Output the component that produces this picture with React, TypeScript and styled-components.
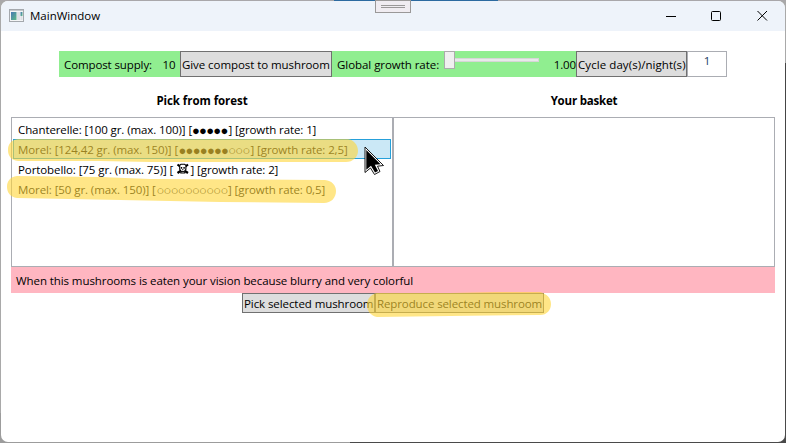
import React from 'react';
import styled, { createGlobalStyle } from 'styled-components';

const GlobalStyle = createGlobalStyle`
  * { box-sizing: border-box; }
  body { margin: 0; overflow: hidden; }
`;

const Desktop = styled.div`
  position: relative;
  width: 786px;
  height: 443px;
  padding: 1px 1px 1px;
  background:
    linear-gradient(90deg, #a9a7aa 334px, #2c6aa0 334px, #2c6aa0 498px, #a9a7aa 498px) 0 0 / 786px 1px no-repeat,
    linear-gradient(90deg, #9c9c9c 350px, #4a4a4a 350px) 0 100% / 786px 30px no-repeat,
    linear-gradient(90deg, #a9a9a9 400px, transparent 400px),
    linear-gradient(180deg, #a9a9a9 63px, #454545 63px);
`;

const Window = styled.main`
  display: flex;
  flex-direction: column;
  width: 784px;
  height: 441px;
  overflow: hidden;
  border-radius: 7px;
  background: #fff;
  color: #000;
  font-family: "Open Sans", sans-serif;
  font-size: 11.5px;
  line-height: 16px;
  white-space: pre;
`;

const TitleBar = styled.header`
  display: flex;
  align-items: center;
  flex: none;
  height: 30px;
  padding-left: 8px;
  background: #eef3fa;
`;

const Title = styled.h1`
  flex: 1;
  margin: 0 0 0 5px;
  font-size: inherit;
  font-weight: 400;
`;

const WindowControls = styled.div`
  display: flex;
  align-items: center;
  gap: 35px;
  padding: 0 17px 2px 0;
  svg { display: block; }
`;

const Grip = styled.div`
  position: absolute;
  top: 0;
  left: 375px;
  display: flex;
  flex-direction: column;
  align-items: center;
  gap: 1px;
  width: 36px;
  height: 13px;
  padding-top: 4px;
  border: 1px solid #9a9898;
  background: #f0ecf1;
  &::before, &::after { content: ""; width: 24px; height: 1px; background: #9a9898; }
`;

const Toolbar = styled.div`
  display: flex;
  height: 26px;
  margin: 20px 58px 0;
`;

const GreenPanel = styled.div<{ $width: number }>`
  display: flex;
  width: ${(p) => p.$width}px;
  padding-left: 5px;
  background: #90ee90;
`;

const Label = styled.span<{ $width?: number; $tracking?: number; $align?: string }>`
  flex: none;
  width: ${(p) => (p.$width ? `${p.$width}px` : 'auto')};
  padding-top: 6px;
  letter-spacing: ${(p) => p.$tracking ?? -0.11}px;
  text-align: ${(p) => p.$align ?? 'left'};
`;

const Button = styled.button<{ $width: number; $height: number; $tracking: number }>`
  flex: none;
  width: ${(p) => p.$width}px;
  height: ${(p) => p.$height}px;
  padding: ${(p) => (p.$height > 20 ? 2 : 1)}px 0 0 1px;
  border: 1px solid #707070;
  background: #ddd;
  color: inherit;
  font: inherit;
  letter-spacing: ${(p) => p.$tracking}px;
  text-align: left;
  white-space: pre;
`;

const Slider = styled.div`
  display: flex;
  width: 95px;
  height: 18px;
  margin-left: 3px;
`;

const Thumb = styled.div`
  width: 11px;
  height: 18px;
  border: 1px solid #acacac;
  background: #f0f0f0;
`;

const Track = styled.div`
  flex: 1;
  height: 4px;
  margin-top: 7px;
  border: 1px solid #d6d6d6;
  border-left: 0;
  background: #e7eaea;
`;

const CycleInput = styled.div`
  width: 40px;
  height: 26px;
  padding-top: 1px;
  border: 1px solid #abadb3;
  color: #1c3c60;
  text-align: center;
`;

const Columns = styled.section`
  display: grid;
  grid-template-columns: 382px 382px;
  grid-template-rows: 40px 150px;
  margin: 0 10px;
`;

const Heading = styled.h2<{ $tracking: number }>`
  margin: 0;
  padding-top: 16px;
  font-size: inherit;
  font-weight: 700;
  letter-spacing: ${(p) => p.$tracking}px;
  text-align: center;
`;

const ListBox = styled.ul`
  margin: 0;
  padding: 1px;
  border: 1px solid #abadb3;
  list-style: none;
`;

const Item = styled.li<{ $selected?: boolean }>`
  display: flex;
  height: 20px;
  padding: 2px 4px 0;
  border: 1px solid ${(p) => (p.$selected ? '#26a0da' : 'transparent')};
  background: ${(p) => (p.$selected ? '#cbe8f6' : 'transparent')};
`;

const Part = styled.span<{ $width: number }>`
  flex: none;
  width: ${(p) => p.$width}px;
  letter-spacing: -0.09px;
  svg { display: block; margin: 0 0 0 1px; }
`;

const Dots = styled(Part)`
  font-size: 13px;
  letter-spacing: -0.75px;
`;

const Message = styled.p`
  height: 26px;
  margin: 0 10px;
  padding: 6px 5px 0;
  background: #ffb6c1;
  letter-spacing: -0.083px;
`;

const Actions = styled.div`
  display: flex;
  margin-left: 241px;
`;

const Overlay = styled.svg`
  position: absolute;
  inset: 0;
  pointer-events: none;
`;

const AppIcon = () => (
  <svg width="16" height="14" viewBox="0 0 16 14">
    <defs>
      <linearGradient id="screen" x1="0" y1="0" x2="1" y2="1">
        <stop offset="0" stopColor="#4778b4" />
        <stop offset="1" stopColor="#5dba85" />
      </linearGradient>
    </defs>
    <rect x="0.5" y="0.5" width="14" height="12" fill="#f4f5f6" stroke="#a4a8ad" />
    <path d="M1 1.5H14" stroke="#c4c8cc" />
    <rect x="2" y="3" width="5.5" height="8" fill="url(#screen)" />
    <rect x="8" y="3" width="3" height="8" fill="#dde0e5" />
    <rect x="11.5" y="3" width="2" height="4" fill="url(#screen)" />
    <rect x="11.5" y="7" width="2" height="4" fill="#dde0e5" />
  </svg>
);

const SkullIcon = () => (
  <svg width="14" height="13" viewBox="0 0 14 13" fill="none" stroke="#000">
    <path d="M1.5 2.5L4 4.5M12 2.5L9.5 4.5M1.5 11L4.5 9M12 11L9 9" strokeWidth="2.2" />
    <path d="M3.7 3.2L5 2.2H8.6L9.9 3.2V7.3L8.8 8.8V11H4.8V8.8L3.7 7.3Z" fill="#fff" strokeWidth="1.1" />
    <path d="M4.8 5.9H6.2M7.4 5.9H8.8" strokeWidth="1.7" />
    <path d="M6.8 7V8.3M5 9.6H8.6" strokeWidth="1" />
  </svg>
);

export default function App() {
  return (
    <>
      <GlobalStyle />
      <Desktop>
        <Window>
          <TitleBar>
            <AppIcon />
            <Title>MainWindow</Title>
            <WindowControls>
              <svg width="10" height="11" viewBox="0 0 10 11" stroke="#000"><path d="M0 6.5H10" /></svg>
              <svg width="11" height="11" viewBox="0 0 11 11" fill="none" stroke="#000"><rect x="0.5" y="1.5" width="9" height="9" rx="1" /></svg>
              <svg width="11" height="11" viewBox="0 0 11 11" stroke="#000"><path d="M0.5 1L10 10.5M10 1L0.5 10.5" /></svg>
            </WindowControls>
          </TitleBar>

          <Toolbar>
            <GreenPanel $width={121}>
              <Label $width={98.5}>Compost supply:</Label>
              <Label $tracking={-0.1}>10</Label>
            </GreenPanel>
            <Button $width={152} $height={26} $tracking={-0.07}>Give compost to mushroom</Button>
            <GreenPanel $width={244}>
              <Label $width={104} $tracking={-0.05}>Global growth rate:</Label>
              <Slider><Thumb /><Track /></Slider>
              <Label $width={37} $align="right">1.00</Label>
            </GreenPanel>
            <Button $width={111} $height={26} $tracking={0.07}>Cycle day(s)/night(s)</Button>
            <CycleInput>1</CycleInput>
          </Toolbar>

          <Columns>
            <Heading $tracking={-0.06}>Pick from forest</Heading>
            <Heading $tracking={-0.2}>Your basket</Heading>
            <ListBox>
              <Item>
                <Part $width={174}>Chanterelle: [100 gr. (max. 100)] [</Part>
                <Dots $width={36.5}>●●●●●</Dots>
                <Part $width={90}>] [growth rate: 1]</Part>
              </Item>
              <Item $selected>
                <Part $width={160.5}>Morel: [124,42 gr. (max. 150)] [</Part>
                <Dots $width={72}>●●●●●●●○○○</Dots>
                <Part $width={100}>] [growth rate: 2,5]</Part>
              </Item>
              <Item>
                <Part $width={157}>Portobello: [75 gr. (max. 75)] [</Part>
                <Part $width={15.5}><SkullIcon /></Part>
                <Part $width={90}>] [growth rate: 2]</Part>
              </Item>
              <Item>
                <Part $width={138.5}>Morel: [50 gr. (max. 150)] [</Part>
                <Dots $width={71.5}>○○○○○○○○○○</Dots>
                <Part $width={100}>] [growth rate: 0,5]</Part>
              </Item>
            </ListBox>
            <ListBox />
          </Columns>

          <Message>When this mushrooms is eaten your vision because blurry and very colorful</Message>
          <Actions>
            <Button $width={133} $height={20} $tracking={-0.08}>Pick selected mushroom</Button>
            <Button $width={169} $height={20} $tracking={-0.11}>Reproduce selected mushroom</Button>
          </Actions>
        </Window>

        <Grip />

        <Overlay width="786" height="443" viewBox="0 0 786 443">
          <g fill="rgb(255,213,55)" fillOpacity="0.6">
            <path d="M18 139H348C354 140 358 145 358 151C358 157 353 162 346 162H150L100 161H18C11 160 8 156 8 150C8 144 11 140 18 139Z" />
            <path d="M17 176L100 177L150 179L325 180C332 181 336 185 336 191C336 198 331 203 324 203L220 202L120 200L17 198C10 197 7 192 7 187C7 181 10 177 17 176Z" />
            <path d="M377 293L450 293L495 292L540 292C547 294 551 298 551 304C551 310 547 315 540 315L450 316L377 317C371 316 367 311 367 305C367 299 371 294 377 293Z" />
          </g>
          <g strokeLinejoin="round">
            <path d="M365 147V172.5L370.5 168L374.5 174.5L380 171.5L377.5 166.2L383.5 165.5Z" fill="#fff" stroke="#000" strokeWidth="0.9" />
            <path d="M366.3 150V169.8L371 165.8L375 172.6L378 171L374.8 164.8L380.5 164.2Z" fill="#000" />
          </g>
        </Overlay>
      </Desktop>
    </>
  );
}
